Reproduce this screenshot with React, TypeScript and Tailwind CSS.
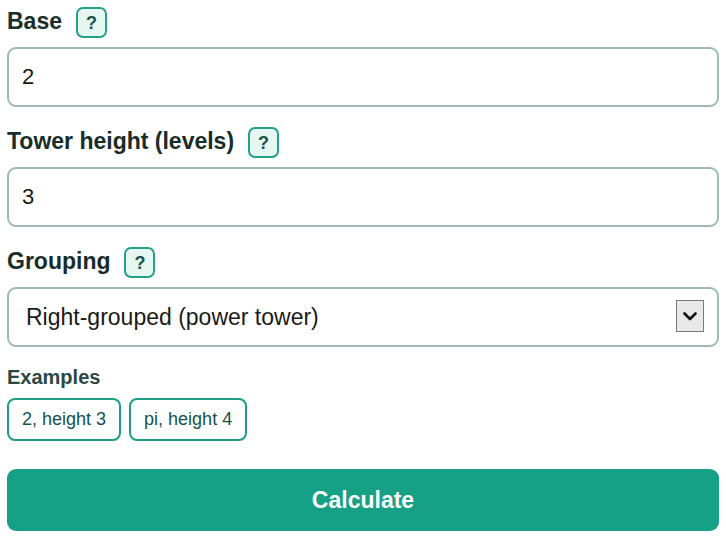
import React from 'react';

const HelpBadge: React.FC = () => (
    <span className="ml-[14px] inline-flex h-[31px] w-[31px] items-center justify-center rounded-[7px] border-2 border-[#22a088] bg-[#e6f6f0] text-[18px] font-bold leading-none text-[#17524a]">
        ?
    </span>
);

const FieldLabel: React.FC<{ text: string }> = ({ text }) => (
    <div className="mb-[9px] flex h-[31px] items-center">
        <span className="-mt-[2px] text-[23px] font-bold leading-none text-[#182d29]">{text}</span>
        <HelpBadge />
    </div>
);

const App: React.FC = () => {
    const [base, setBase] = React.useState('2');
    const [height, setHeight] = React.useState('3');
    const [grouping, setGrouping] = React.useState('right');

    return (
        <div
            className="min-h-screen w-[726px] bg-white px-[7px] pt-[7px]"
            style={{ fontFamily: '"Liberation Sans", Arial, sans-serif' }}
        >
            {/* Base */}
            <FieldLabel text="Base" />
            <input
                value={base}
                onChange={(e) => setBase(e.target.value)}
                className="mb-[20px] box-border block h-[60px] w-full rounded-[9px] border-2 border-[#9dbbb4] bg-white px-[13px] text-[22px] text-[#1a1a1a] outline-none"
            />

            {/* Tower height */}
            <FieldLabel text="Tower height (levels)" />
            <input
                value={height}
                onChange={(e) => setHeight(e.target.value)}
                className="mb-[20px] box-border block h-[60px] w-full rounded-[9px] border-2 border-[#9dbbb4] bg-white px-[13px] text-[22px] text-[#1a1a1a] outline-none"
            />

            {/* Grouping */}
            <FieldLabel text="Grouping" />
            <div className="relative">
                <select
                    value={grouping}
                    onChange={(e) => setGrouping(e.target.value)}
                    className="box-border block h-[60px] w-full appearance-none rounded-[9px] border-2 border-[#9dbbb4] bg-white pl-[17px] pr-[50px] text-[23px] text-[#1a1a1a] outline-none"
                >
                    <option value="right">Right-grouped (power tower)</option>
                    <option value="left">Left-grouped</option>
                </select>
                <span className="pointer-events-none absolute right-[15px] top-[13px] flex h-[32px] w-[28px] items-center justify-center border border-[#7a7a7a] bg-[#e9e9e9]">
                    <svg width="14" height="9" viewBox="0 0 14 9" fill="none">
                        <path d="M1.5 1.5 L7 7 L12.5 1.5" stroke="#111" strokeWidth="2.6" strokeLinecap="round" strokeLinejoin="round" />
                    </svg>
                </span>
            </div>

            {/* Examples */}
            <div className="mt-[19px] text-[20px] font-bold leading-[22px] text-[#2c4843]">Examples</div>
            <div className="mt-[10px] flex gap-[8px]">
                <button className="h-[43px] rounded-[8px] border-2 border-[#1f9e86] bg-white px-[13px] text-[18px] text-[#17524a]">
                    2, height 3
                </button>
                <button className="h-[43px] rounded-[8px] border-2 border-[#1f9e86] bg-white px-[13px] text-[18px] text-[#17524a]">
                    pi, height 4
                </button>
            </div>

            <button className="mt-[28px] block h-[62px] w-full rounded-[9px] bg-[#16a085] text-[23px] font-bold text-white">
                Calculate
            </button>
        </div>
    );
};

export default App;
